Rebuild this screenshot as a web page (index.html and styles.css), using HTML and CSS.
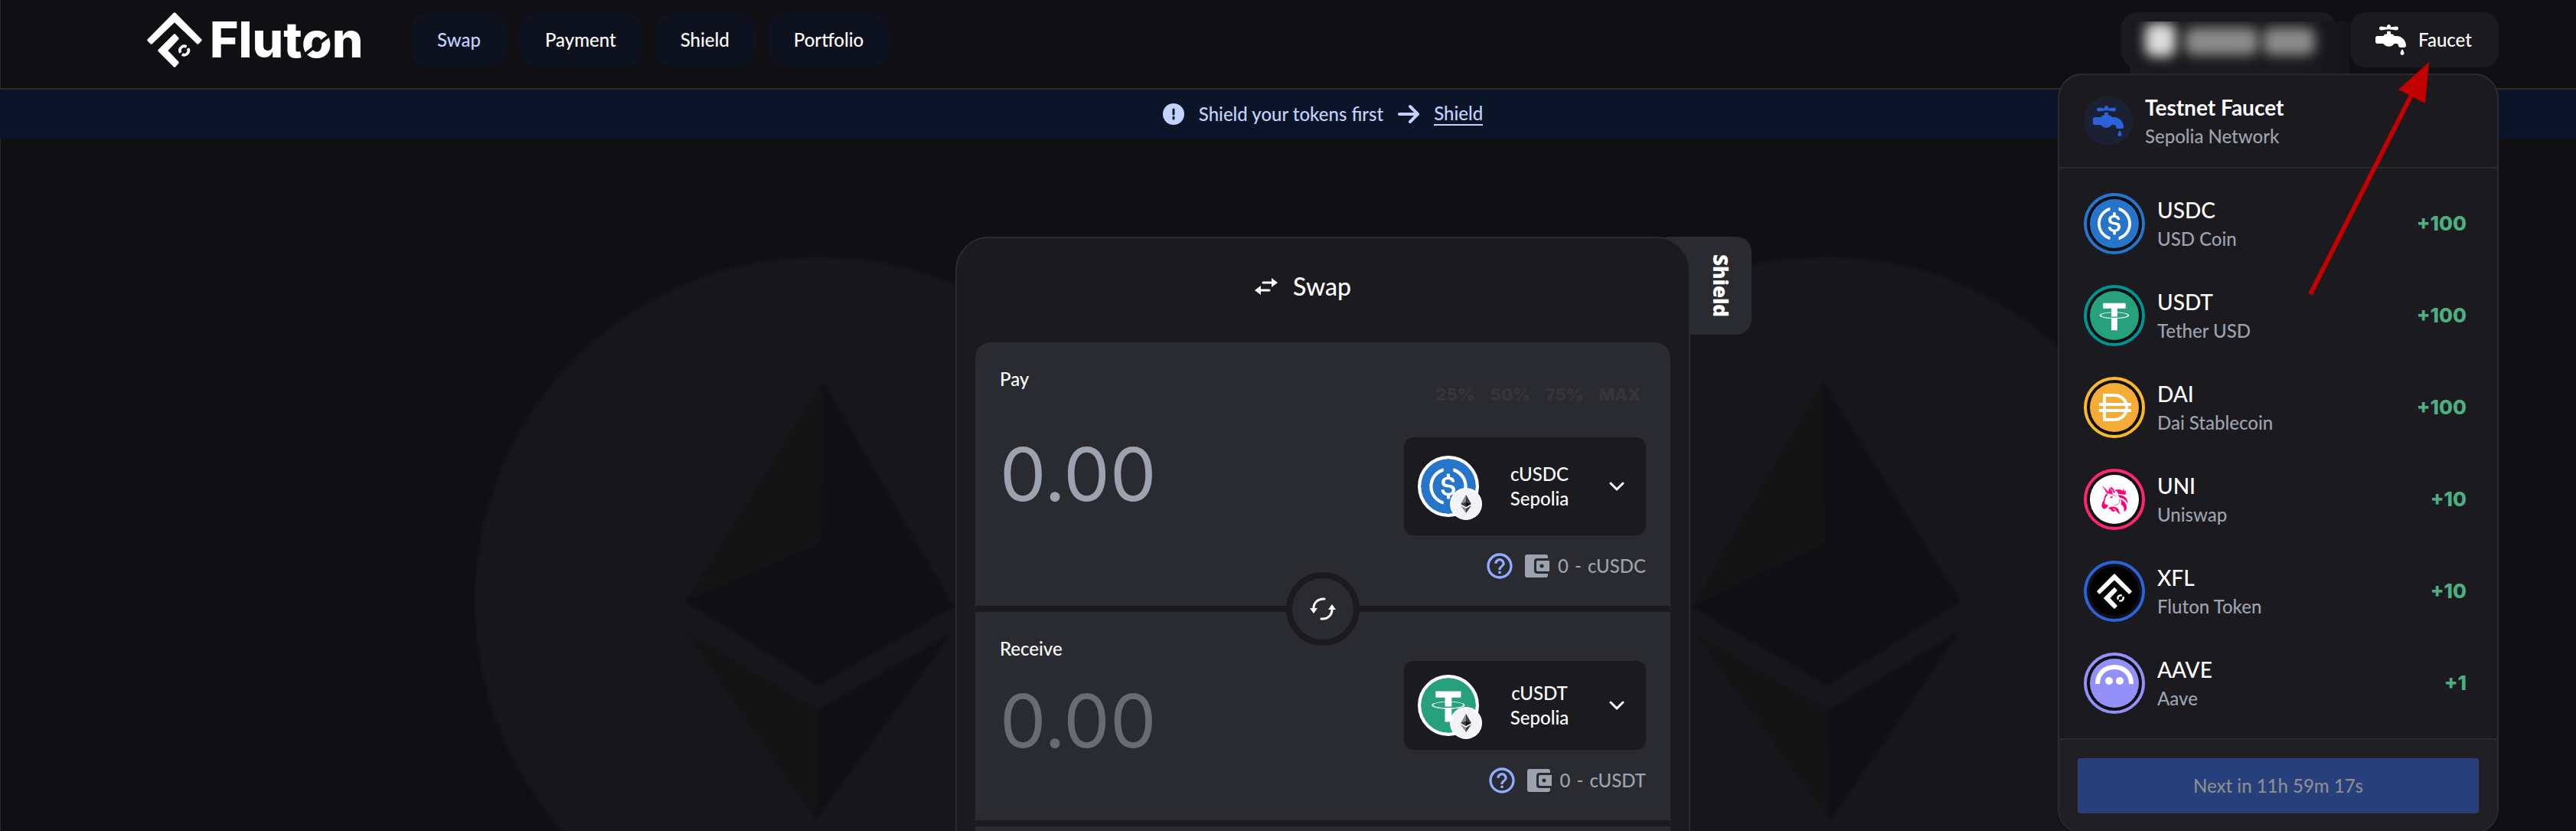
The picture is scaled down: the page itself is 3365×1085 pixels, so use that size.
FILE: index.html
```html
<!DOCTYPE html>
<html lang="en">
<head>
<meta charset="utf-8">
<title>Fluton</title>
<meta name="viewport" content="width=device-width, initial-scale=1">
<link rel="stylesheet" href="styles.css">
</head>
<body>
<svg class="sprite" aria-hidden="true">
  <symbol id="mark" viewBox="36 48 216 216">
    <g fill="currentColor" stroke="currentColor" stroke-width="10" stroke-linejoin="round">
      <path d="M144 54L246 157L235 168L144 81L53 168L42 157Z"/>
      <path d="M144 138L156 151L111 198L156 245L144 258L84 198Z"/>
    </g>
    <path d="M196.700 189.500A17 17 0 0 1 173.500 212.700M167.300 206.500A17 17 0 0 1 190.500 183.300" fill="none" stroke="currentColor" stroke-width="11"/>
  </symbol>
  <symbol id="faucet" viewBox="0 0 512 512">
    <path fill="currentColor" d="M224 0c17.700 0 32 14.300 32 32V44l96-12c17.700 0 32 14.300 32 32s-14.300 32-32 32L256 84l-31-3.900-1-.1-1 .1L192 84 96 96C78.300 96 64 81.700 64 64s14.300-32 32-32l96 12V32c0-17.700 14.300-32 32-32zM0 224c0-17.700 14.300-32 32-32h96l22.600-22.600c6-6 14.100-9.400 22.600-9.400H192V116.200l32-4 32 4V160h18.700c8.500 0 16.600 3.400 22.600 9.400L320 192h32c88.400 0 160 71.600 160 160c0 17.700-14.300 32-32 32H416c-17.700 0-32-14.300-32-32s-14.300-32-32-32H315.900c-20.200 29-53.900 48-91.900 48s-71.700-19-91.900-48H32c-17.700 0-32-14.300-32-32V224zM436.800 423.400c1.900-4.500 6.300-7.400 11.200-7.400s9.200 2.900 11.200 7.400l18.200 42.400c1.800 4.100 2.700 8.600 2.700 13.100V480c0 17.700-14.300 32-32 32s-32-14.300-32-32v-1.200c0-4.500 .9-8.900 2.700-13.100l18.200-42.400z"/>
  </symbol>
  <symbol id="usdc" viewBox="0 0 32 32">
    <circle cx="16" cy="16" r="16" fill="#2775ca"/>
    <path fill="#fff" d="M20.022 18.124c0-2.124-1.280-2.852-3.840-3.156-1.828-.243-2.193-.728-2.193-1.578 0-.85.61-1.396 1.828-1.396 1.097 0 1.707.364 2.011 1.275a.458.458 0 00.427.303h.975a.416.416 0 00.427-.425v-.06a3.040 3.040 0 00-2.743-2.489V9.142c0-.243-.183-.425-.487-.486h-.915c-.243 0-.426.182-.487.486v1.396c-1.829.242-2.986 1.456-2.986 2.974 0 2.002 1.218 2.791 3.778 3.095 1.707.303 2.255.668 2.255 1.639 0 .97-.853 1.638-2.011 1.638-1.585 0-2.133-.667-2.316-1.578-.06-.242-.244-.364-.427-.364h-1.036a.416.416 0 00-.426.425v.06c.243 1.518 1.219 2.610 3.230 2.914v1.457c0 .242.183.425.487.485h.915c.243 0 .426-.182.487-.485V21.340c1.829-.303 3.047-1.578 3.047-3.217z"/>
    <path fill="#fff" d="M12.892 24.497c-4.754-1.700-7.192-6.980-5.424-11.653.914-2.550 2.925-4.491 5.424-5.402.244-.121.365-.303.365-.607v-.85c0-.242-.121-.424-.365-.485-.061 0-.183 0-.244.06a10.895 10.895 0 00-7.130 13.717c1.096 3.400 3.717 6.010 7.130 7.102.244.121.488 0 .548-.243.061-.06.061-.122.061-.243v-.85c0-.182-.182-.424-.365-.546zm6.460-18.936c-.244-.122-.488 0-.548.242-.061.061-.061.122-.061.243v.85c0 .243.182.485.365.607 4.754 1.700 7.192 6.980 5.424 11.653-.914 2.550-2.925 4.491-5.424 5.402-.244.121-.365.303-.365.607v.85c0 .242.121.424.365.485.061 0 .183 0 .244-.06a10.895 10.895 0 007.130-13.717c-1.096-3.460-3.778-6.070-7.130-7.162z"/>
  </symbol>
  <symbol id="usdt" viewBox="0 0 32 32">
    <circle cx="16" cy="16" r="16" fill="#26a17b"/>
    <path fill="#fff" d="M17.922 17.383v-.002c-.11.008-.677.042-1.942.042-1.010 0-1.721-.03-1.971-.042v.003c-3.888-.171-6.790-.848-6.790-1.658 0-.809 2.902-1.486 6.790-1.660v2.644c.254.018.982.061 1.988.061 1.207 0 1.812-.05 1.925-.06v-2.643c3.880.173 6.775.85 6.775 1.658 0 .81-2.895 1.485-6.775 1.657m0-3.590v-2.366h5.414V7.819H8.595v3.608h5.414v2.365c-4.400.202-7.709 1.074-7.709 2.118 0 1.044 3.309 1.915 7.709 2.118v7.582h3.913v-7.584c4.393-.202 7.694-1.073 7.694-2.116 0-1.043-3.301-1.914-7.694-2.117"/>
  </symbol>
  <symbol id="eth" viewBox="0 0 42 42">
    <circle cx="21" cy="21" r="20" fill="#f2f3f8" stroke="#fff" stroke-width="2"/>
    <path d="M21 9L14 21L21 18Z" fill="#8a8a86"/><path d="M21 9L28 21L21 18Z" fill="#3c3c3a"/>
    <path d="M14 21L21 18V25Z" fill="#3c3c3a"/><path d="M28 21L21 18V25Z" fill="#131313"/>
    <path d="M14 23L21 27V33Z" fill="#8a8a86"/><path d="M28 23L21 27V33Z" fill="#3c3c3a"/>
  </symbol>
  <symbol id="help" viewBox="0 0 24 24">
    <path fill="currentColor" d="M11 18h2v-2h-2v2zm1-16C6.480 2 2 6.480 2 12s4.480 10 10 10 10-4.480 10-10S17.520 2 12 2zm0 18c-4.410 0-8-3.590-8-8s3.590-8 8-8 8 3.590 8 8-3.590 8-8 8zm0-14c-2.210 0-4 1.790-4 4h2c0-1.100.9-2 2-2s2 .9 2 2c0 2-3 1.750-3 5h2c0-2.250 3-2.500 3-5 0-2.210-1.790-4-4-4z"/>
  </symbol>
  <symbol id="wallet" viewBox="0 0 32 32">
    <path fill="currentColor" fill-rule="evenodd" d="M3 1H27A3 3 0 0 1 30 4V6H16A4 4 0 0 0 12 10V22A4 4 0 0 0 16 26H30V28A3 3 0 0 1 27 31H3A3 3 0 0 1 0 28V4A3 3 0 0 1 3 1ZM17 9H32V23H17A2 2 0 0 1 15 21V11A2 2 0 0 1 17 9ZM22 13.500A2.500 2.500 0 1 0 22 18.500A2.500 2.500 0 1 0 22 13.500Z"/>
  </symbol>
  <symbol id="chevron" viewBox="0 0 20 12">
    <path d="M2 2L10 10L18 2" fill="none" stroke="currentColor" stroke-width="3" stroke-linecap="round" stroke-linejoin="round"/>
  </symbol>
</svg>

<header class="topbar">
  <a class="brand" href="#">
    <svg class="brand-mark" aria-hidden="true"><use href="#mark"/></svg>
    <span class="brand-name">Flut<span class="cut">o</span>n</span>
  </a>
  <nav class="nav">
    <a class="nav-link active" href="#">Swap</a>
    <a class="nav-link" href="#">Payment</a>
    <a class="nav-link" href="#">Shield</a>
    <a class="nav-link" href="#">Portfolio</a>
  </nav>
  <div class="actions">
    <button class="pill account" type="button" aria-label="Account">
      <span class="veil"><span class="blob avatar"></span><span class="blob part-a"></span><span class="blob part-b"></span></span>
    </button>
    <button class="pill faucet-toggle" type="button">
      <svg class="icon-40" aria-hidden="true"><use href="#faucet"/></svg>Faucet
    </button>

    <section class="menu" aria-label="Testnet Faucet">
      <div class="menu-head">
        <span class="menu-badge"><svg class="icon-40" aria-hidden="true"><use href="#faucet"/></svg></span>
        <div>
          <h2 class="menu-title">Testnet Faucet</h2>
          <p class="sub">Sepolia Network</p>
        </div>
      </div>
      <ul class="tokens">
        <li class="token">
          <span class="coin usdc"><svg aria-hidden="true"><use href="#usdc"/></svg></span>
          <div class="token-text"><p class="name">USDC</p><p class="sub">USD Coin</p></div>
          <span class="amount">+100</span>
        </li>
        <li class="token">
          <span class="coin usdt"><svg aria-hidden="true"><use href="#usdt"/></svg></span>
          <div class="token-text"><p class="name">USDT</p><p class="sub">Tether USD</p></div>
          <span class="amount">+100</span>
        </li>
        <li class="token">
          <span class="coin dai"><svg viewBox="0 0 64 64" aria-hidden="true">
            <circle cx="32" cy="32" r="32" fill="#f5ac37"/>
            <path d="M19 16H31C42 16 48 23 48 32S42 48 31 48H19ZM12 28H54M12 36H54" fill="none" stroke="#fff" stroke-width="4"/>
          </svg></span>
          <div class="token-text"><p class="name">DAI</p><p class="sub">Dai Stablecoin</p></div>
          <span class="amount">+100</span>
        </li>
        <li class="token">
          <span class="coin uni"><svg viewBox="59 60 192 192" aria-hidden="true">
            <circle cx="155" cy="156" r="96" fill="#fff"/>
            <g fill="#ff007a">
              <path d="M105 100L135 130L128 135Z"/>
              <path d="M134 134C131 124 132 114 137 112L144 128L139 108C146 106 154 116 158 130L152 132C150 122 147 116 144 116L149 134Z"/>
              <path d="M158 119C176 114 184 119 188 124L190 112L195 126L200 120C200 130 199 134 198 139C188 134 178 136 170 135C168 127 164 123 158 123Z"/>
              <path d="M168 139C192 138 206 148 208 172C198 157 188 151 176 149Z"/>
              <path d="M178 155C196 162 207 178 202 196C200 201 196 203 192 204C196 190 190 182 180 175C184 168 182 160 178 155Z"/>
              <path d="M124 134C113 142 118 156 108 168C103 178 105 189 113 193C123 194 130 186 130 178C124 176 118 176 116 170C119 156 120 144 130 138Z"/>
              <path d="M132 189C146 181 164 183 171 195C172 204 175 209 181 213C170 212 162 202 158 194C153 189 147 192 152 195C159 197 160 203 152 204C141 203 145 194 132 193Z"/>
              <path d="M137 147L148 143L147 150L141 151Z"/>
            </g>
            <path d="M175 156C178 172 167 180 155 179M140 135C152 138 160 142 164 148" fill="none" stroke="#ff007a" stroke-width="2"/>
          </svg></span>
          <div class="token-text"><p class="name">UNI</p><p class="sub">Uniswap</p></div>
          <span class="amount">+10</span>
        </li>
        <li class="token">
          <span class="coin xfl"><svg class="xfl-mark" aria-hidden="true"><use href="#mark"/></svg></span>
          <div class="token-text"><p class="name">XFL</p><p class="sub">Fluton Token</p></div>
          <span class="amount">+10</span>
        </li>
        <li class="token">
          <span class="coin aave"><svg viewBox="0 0 64 64" aria-hidden="true">
            <circle cx="32" cy="32" r="32" fill="#9391f7"/>
            <path d="M10 33C10 19 20 11 32 11S54 19 54 33" fill="none" stroke="#fff" stroke-width="6"/>
            <circle cx="25" cy="29" r="5" fill="#fff"/><circle cx="39" cy="29" r="5" fill="#fff"/>
          </svg></span>
          <div class="token-text"><p class="name">AAVE</p><p class="sub">Aave</p></div>
          <span class="amount">+1</span>
        </li>
      </ul>
      <div class="menu-foot"><button class="claim" type="button" disabled>Next in 11h 59m 17s</button></div>
    </section>

    <svg class="pointer" viewBox="0 0 160 308" aria-hidden="true">
      <path d="M4 304L137 42" stroke="#c30000" stroke-width="6"/>
      <path d="M159 1L119 37L154 55Z" fill="#c30000"/>
    </svg>
  </div>
</header>

<div class="notice">
  <svg class="icon-28" viewBox="0 0 28 28" aria-hidden="true"><circle cx="14" cy="14" r="14" fill="#c3d2ff"/><path d="M14 8V14M14 18V20" stroke="#0c1527" stroke-width="3" stroke-linecap="round"/></svg>
  <span>Shield your tokens first</span>
  <svg class="icon-28" viewBox="0 0 28 28" aria-hidden="true"><path d="M2 14H25M16 4L26 14L16 24" fill="none" stroke="#c3d2ff" stroke-width="4" stroke-linecap="round" stroke-linejoin="round"/></svg>
  <a href="#">Shield</a>
</div>

<main class="stage">
  <div class="swap">
    <svg class="backdrop" viewBox="620 335 2216 900" aria-hidden="true">
      <g class="soft">
        <circle cx="1070" cy="785" r="450" fill="#17171b"/>
        <path d="M1075 498L895 785L1072 709Z" fill="#141415"/>
        <path d="M1075 498L1246 792L1069 895L895 785L1072 709Z" fill="#101014"/>
        <path d="M895 823L1068 927L1065 1071Z" fill="#141415"/>
        <path d="M1243 827L1068 927L1065 1071Z" fill="#101014"/>
        <circle cx="2386" cy="785" r="450" fill="#17171b"/>
        <path d="M2381 498L2210 792L2384 709Z" fill="#141415"/>
        <path d="M2381 498L2561 785L2387 895L2210 792L2384 709Z" fill="#101014"/>
        <path d="M2213 827L2388 927L2391 1071Z" fill="#141415"/>
        <path d="M2561 823L2388 927L2391 1071Z" fill="#101014"/>
      </g>
    </svg>
    <button class="side-tab" type="button">Shield</button>
    <section class="card">
      <h1 class="card-title">
        <svg class="title-icon" viewBox="0 0 30 24" aria-hidden="true"><path d="M11 7H23M19 17H7" stroke="#fff" stroke-width="3" stroke-linecap="round"/><path d="M22 1L30 7L22 13ZM8 11L0 17L8 23Z" fill="#fff"/></svg>
        Swap
      </h1>

      <div class="panel first">
        <div class="side">
          <label for="pay">Pay</label>
          <input class="value" id="pay" type="text" placeholder="0.00">
        </div>
        <div class="pick">
          <div class="shares">
            <button type="button">25%</button><button type="button">50%</button><button type="button">75%</button><button type="button">MAX</button>
          </div>
          <button class="token-select tall" type="button">
            <span class="token-logo"><svg class="logo-main" aria-hidden="true"><use href="#usdc"/></svg><svg class="logo-net" aria-hidden="true"><use href="#eth"/></svg></span>
            <span class="token-label">cUSDC<br>Sepolia</span>
            <svg class="chevron" aria-hidden="true"><use href="#chevron"/></svg>
          </button>
          <div class="balance"><svg class="help" aria-hidden="true"><use href="#help"/></svg><svg class="wallet" aria-hidden="true"><use href="#wallet"/></svg><span class="held"><span>0</span> <span>-</span> <span>cUSDC</span></span></div>
        </div>
      </div>

      <div class="panel second">
        <button class="flip" type="button" aria-label="Switch tokens">
          <svg viewBox="0 0 34 30" aria-hidden="true"><path d="M19 2C11 1 5 7 5 14M15 28C23 29 29 23 29 16" fill="none" stroke="#fff" stroke-width="3" stroke-linecap="round"/><path d="M0 14H10L5 21ZM24 16H34L29 9Z" fill="#fff"/></svg>
        </button>
        <div class="side">
          <label for="receive">Receive</label>
          <input class="value dim" id="receive" type="text" placeholder="0.00" readonly>
        </div>
        <div class="pick">
          <button class="token-select" type="button">
            <span class="token-logo"><svg class="logo-main" aria-hidden="true"><use href="#usdt"/></svg><svg class="logo-net" aria-hidden="true"><use href="#eth"/></svg></span>
            <span class="token-label">cUSDT<br>Sepolia</span>
            <svg class="chevron" aria-hidden="true"><use href="#chevron"/></svg>
          </button>
          <div class="balance"><svg class="help" aria-hidden="true"><use href="#help"/></svg><svg class="wallet" aria-hidden="true"><use href="#wallet"/></svg><span class="held"><span>0</span> <span>-</span> <span>cUSDT</span></span></div>
        </div>
      </div>

      <div class="panel third"></div>
    </section>
  </div>
</main>
</body>
</html>
```
FILE: styles.css
```css
:root {
  --bg: #100f14;
  --card: #1b1a1f;
  --panel: #2a2b30;
  --line: #2a2a2f;
  --muted: #9ca3af;
  --tint: #c3d2ff;
  --gutter-left: 192px;
  --gutter-right: 101px;
}

* { box-sizing: border-box; }

html { height: 100%; overflow: hidden; background: var(--bg); }

body {
  margin: 0;
  height: 100%;
  overflow: hidden;
  background: var(--bg);
  box-shadow: inset 1px 0 #29292d;
  color: #fff;
  font: 500 24px/32px Lato, "Open Sans", sans-serif;
}

h1, h2, p, ul { margin: 0; padding: 0; font-weight: 500; }
ul { list-style: none; }
a { color: inherit; text-decoration: none; }
button, input { margin: 0; padding: 0; border: 0; background: none; color: inherit; font: inherit; }
svg { display: block; flex: none; }

.sprite { position: absolute; width: 0; height: 0; }
.icon-40 { width: 40px; height: 40px; }
.icon-28 { width: 28px; height: 28px; }

/* Header */
.topbar {
  display: flex;
  align-items: center;
  height: 117px;
  padding: 0 var(--gutter-right) 12px var(--gutter-left);
  border-bottom: 2px solid var(--line);
}
.brand { display: flex; align-items: center; gap: 10px; width: 345px; }
.brand-mark { width: 72px; height: 72px; }
.brand-name { font: 800 64px/72px Inter, sans-serif; }
.cut { position: relative; }
.cut::after {
  content: "";
  position: absolute;
  left: 0;
  right: 0;
  top: 58%;
  height: 4px;
  background: var(--bg);
  transform: rotate(-38deg);
}
.nav { display: flex; gap: 16px; }
.nav-link {
  padding: 20px 34px;
  border-radius: 24px;
  background: #0e121e;
}
.nav-link.active { color: var(--tint); }

.actions { position: relative; z-index: 2; display: flex; gap: 18px; margin-left: auto; }
.pill {
  display: flex;
  align-items: center;
  height: 72px;
  border-radius: 20px;
  background: var(--card);
}
.faucet-toggle { gap: 16px; width: 194px; padding: 0 33px; }
.account { position: relative; width: 281px; }
.veil {
  position: absolute;
  inset: 12px -17px -8px 11px;
  overflow: hidden;
  background: linear-gradient(90deg, #1a1a1d 80%, #151519);
}
.blob { position: absolute; border-radius: 12px; filter: blur(8px); background: #8c8c8c; }
.avatar { left: 20px; top: 2px; width: 40px; height: 44px; background: #dcdcdc; }
.part-a { left: 72px; top: 8px; width: 96px; height: 36px; }
.part-b { left: 174px; top: 8px; width: 68px; height: 36px; }

/* Faucet menu */
.menu {
  position: absolute;
  top: 80px;
  right: 0;
  width: 576px;
  overflow: hidden;
  border: 2px solid var(--line);
  border-radius: 32px;
  background: var(--card);
}
.menu-head {
  display: flex;
  align-items: center;
  gap: 16px;
  padding: 24px 32px;
  border-bottom: 2px solid var(--line);
}
.menu-badge {
  display: grid;
  place-items: center;
  width: 64px;
  height: 64px;
  border-radius: 50%;
  background: #1b2033;
  color: #2b62d9;
}
.menu-title, .name { padding-bottom: 4px; font-size: 28px; line-height: 36px; }
.menu-title { font-weight: 700; }
.sub { color: var(--muted); }
.tokens { padding: 12px 40px 12px 32px; }
.token { display: flex; align-items: center; gap: 16px; height: 120px; }
.coin {
  display: grid;
  place-items: center;
  width: 80px;
  height: 80px;
  border: 4px solid;
  border-radius: 50%;
  background: var(--bg);
}
.coin svg { width: 64px; height: 64px; }
.coin.usdc { border-color: #2775ca; }
.coin.usdt { border-color: #009393; }
.coin.dai { border-color: #fab92b; }
.coin.uni { border-color: #ff2670; }
.coin.xfl { border-color: #2b62d9; }
.coin.aave { border-color: #9391f7; }
.coin .xfl-mark { padding: 9px; border-radius: 50%; background: #000; }
.token-text { flex: 1; }
.amount { color: #4caf82; font: 800 26px/32px Inter, sans-serif; }
.menu-foot { padding: 24px; border-top: 2px solid var(--line); background: #202024; }
.claim {
  display: block;
  width: 100%;
  height: 72px;
  border-radius: 4px;
  background: #27407c;
  color: #8d8d90;
}
.pointer { position: absolute; top: 64px; right: 90px; width: 160px; height: 308px; }

/* Notice bar */
.notice {
  display: flex;
  align-items: center;
  justify-content: center;
  gap: 19px;
  height: 64px;
  padding: 0 var(--gutter-right) 0 var(--gutter-left);
  background: #0c1527;
  color: var(--tint);
}
.notice a { line-height: 28px; border-bottom: 2px solid var(--tint); }

/* Swap card */
.stage {
  display: flex;
  justify-content: center;
  padding: 128px var(--gutter-right) 0 var(--gutter-left);
}
.swap { position: relative; width: 960px; }
.backdrop { position: absolute; top: 26px; left: -628px; width: 2216px; height: 900px; }
.soft { filter: blur(2px); }
.side-tab {
  position: absolute;
  top: 0;
  left: calc(100% - 48px);
  width: 128px;
  height: 128px;
  padding-left: 48px;
  border-radius: 20px;
  background: var(--panel);
  font: 800 26px/80px "Open Sans", sans-serif;
  writing-mode: vertical-rl;
}
.card {
  position: relative;
  padding: 0 24px 24px;
  border: 2px solid var(--line);
  border-radius: 44px;
  background: var(--card);
}
.card-title {
  display: flex;
  align-items: center;
  justify-content: center;
  gap: 20px;
  height: 136px;
  padding: 0 52px 10px 0;
  font-size: 32px;
}
.title-icon { width: 30px; height: 24px; }
.panel {
  position: relative;
  display: flex;
  justify-content: space-between;
  margin-bottom: 8px;
  padding: 32px 32px 36px;
  background: var(--panel);
}
.panel.first { border-radius: 20px 20px 0 0; }
.panel.third { height: 160px; }
.side { display: flex; flex-direction: column; }
.value {
  width: 420px;
  height: 116px;
  margin-top: 50px;
  font: 400 96px/116px Inter, sans-serif;
}
.value::placeholder { color: var(--muted); opacity: 1; }
.value.dim { margin-top: 20px; }
.value.dim::placeholder { color: #686a74; }
.pick { display: flex; flex-direction: column; align-items: flex-end; gap: 24px; }
.second .pick { padding-top: 32px; }
.shares { display: flex; gap: 20px; padding: 20px 7px 16px 0; }
.shares button { color: #35353a; font: 800 22px/32px Inter, sans-serif; }
.token-select {
  display: flex;
  align-items: center;
  width: 316px;
  height: 116px;
  padding: 0 28px 0 18px;
  border-radius: 12px;
  background: var(--card);
}
.token-select.tall { height: 128px; }
.token-logo { position: relative; }
.logo-main { width: 80px; height: 80px; border: 4px solid #fff; border-radius: 50%; background: #fff; }
.logo-net { position: absolute; right: -4px; bottom: -4px; width: 42px; height: 42px; }
.token-label { flex: 1; padding-right: 12px; text-align: center; }
.chevron { width: 20px; height: 12px; }
.balance { display: flex; align-items: center; gap: 11px; color: var(--muted); }
.held { display: flex; gap: 8px; }
.help { width: 40px; height: 40px; margin: -4px 2px; color: #8fadff; }
.wallet { width: 32px; height: 32px; }
.flip {
  position: absolute;
  z-index: 1;
  top: -52px;
  left: calc(50% - 48px);
  display: grid;
  place-items: center;
  width: 96px;
  height: 96px;
  border: 8px solid var(--card);
  border-radius: 50%;
  background: var(--panel);
}
.flip svg { width: 34px; height: 30px; }
```
